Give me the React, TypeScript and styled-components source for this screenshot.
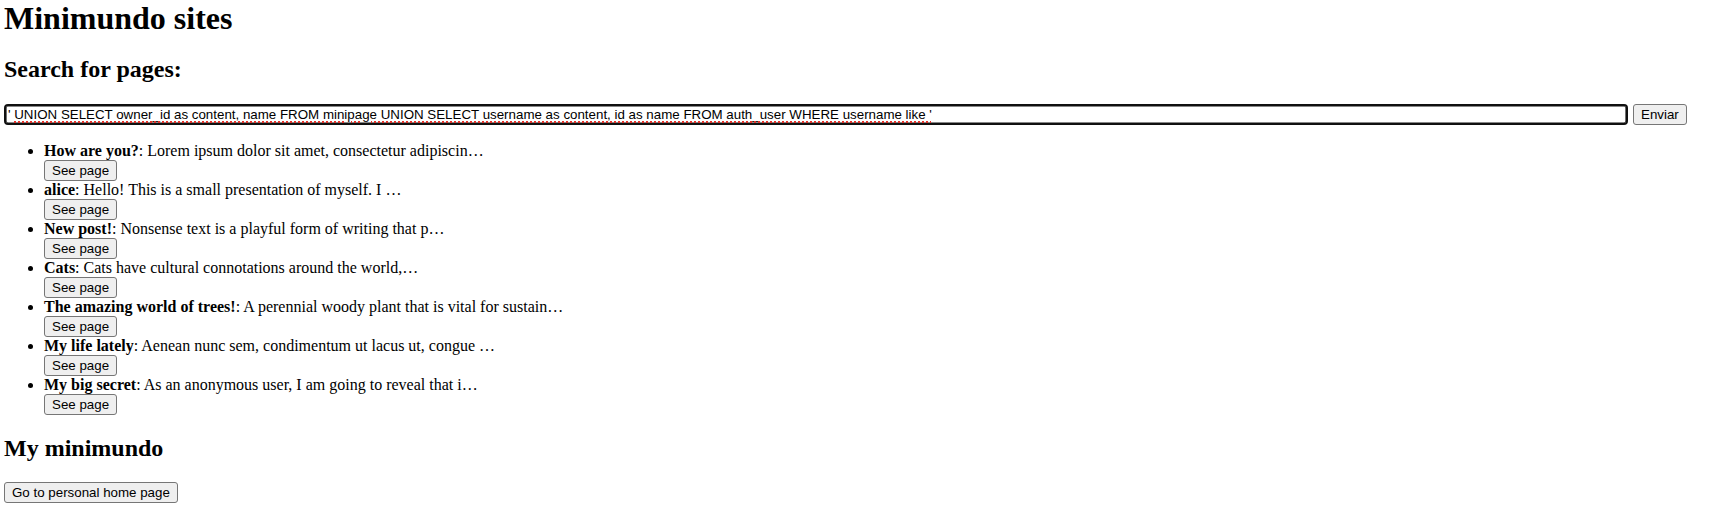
import React from 'react';

import styled, { createGlobalStyle } from 'styled-components';

const QUERY_HEAD = "' ";
const QUERY_BODY =
  'UNION SELECT owner_id as content, name FROM minipage UNION SELECT username as content, id as name FROM auth_user WHERE username like \'';

type Page = {
  title: string;
  summary: string;
};

const pages: Page[] = [
  { title: 'How are you?', summary: 'Lorem ipsum dolor sit amet, consectetur adipiscin…' },
  { title: 'alice', summary: 'Hello! This is a small presentation of myself. I …' },
  { title: 'New post!', summary: 'Nonsense text is a playful form of writing that p…' },
  { title: 'Cats', summary: 'Cats have cultural connotations around the world,…' },
  { title: 'The amazing world of trees!', summary: 'A perennial woody plant that is vital for sustain…' },
  { title: 'My life lately', summary: 'Aenean nunc sem, condimentum ut lacus ut, congue …' },
  { title: 'My big secret', summary: 'As an anonymous user, I am going to reveal that i…' },
];

export default function App() {
  return (
    <>
      <GlobalStyle />
      <Main>
        <Title>Minimundo sites</Title>
        <SearchHeading>Search for pages:</SearchHeading>
        <SearchForm onSubmit={(e) => e.preventDefault()}>
          <QueryField>
            <QueryInput
              type="text"
              spellCheck={false}
              defaultValue={QUERY_HEAD + QUERY_BODY}
            />
            <SpellMarks aria-hidden="true">
              {QUERY_HEAD}
              <Squiggle>{QUERY_BODY}</Squiggle>
            </SpellMarks>
          </QueryField>
          <Button type="submit">Enviar</Button>
        </SearchForm>
        <PageList>
          {pages.map((page) => (
            <PageItem key={page.title}>
              <strong>{page.title}</strong>: {page.summary}
              <ItemButton type="button">See page</ItemButton>
            </PageItem>
          ))}
        </PageList>
        <Heading>My minimundo</Heading>
        <Button type="button">Go to personal home page</Button>
      </Main>
    </>
  );
}

const GlobalStyle = createGlobalStyle`
  body {
    margin: 0;
    background: #fff;
    color: #000;
    font-family: "Liberation Serif", "Times New Roman", serif;
    font-size: 16px;
  }
`;

const Main = styled.main`
  display: block;
  padding: 0 4px;
`;

const Title = styled.h1`
  margin: 0;
  font-size: 32px;
  font-weight: bold;
`;

const Heading = styled.h2`
  margin: 19.92px 0;
  font-size: 24px;
  font-weight: bold;
`;

// sits a touch closer to the title than the browser default
const SearchHeading = styled(Heading)`
  margin: 19.4px 0 21px;
`;

const SearchForm = styled.form`
  display: flex;
  align-items: center;
  gap: 5px;
  margin: 0;
`;

const QueryField = styled.div`
  position: relative;
  flex: 0 0 1624px;
  height: 21px;
`;

const QueryInput = styled.input`
  box-sizing: border-box;
  width: 100%;
  height: 100%;
  margin: 0;
  padding: 1px 2px;
  border: 2px solid #101010;
  border-radius: 4px;
  box-shadow: inset 0 0 0 0.6px #101010;
  outline: none;
  background: #fff;
  color: #000;
  font-family: "Liberation Sans", Arial, sans-serif;
  font-size: 13.333px;
`;

const SpellMarks = styled.span`
  position: absolute;
  top: 3px;
  left: 4px;
  color: transparent;
  font-family: "Liberation Sans", Arial, sans-serif;
  font-size: 13.333px;
  white-space: pre;
  pointer-events: none;
`;

const Squiggle = styled.span`
  text-decoration: underline dotted #e0342c;
  text-decoration-thickness: 2px;
  text-underline-offset: 2px;
`;

const Button = styled.button`
  box-sizing: border-box;
  height: 21px;
  margin: 0;
  padding: 1px 7px;
  border: 1px solid #767676;
  border-radius: 3px;
  background: #efefef;
  color: #000;
  font-family: "Liberation Sans", Arial, sans-serif;
  font-size: 13.333px;
`;

const PageList = styled.ul`
  margin: 16.6px 0 16px;
  padding-left: 40px;
  list-style: disc;
`;

const PageItem = styled.li`
  line-height: normal;
`;

const ItemButton = styled(Button)`
  display: block;
`;
